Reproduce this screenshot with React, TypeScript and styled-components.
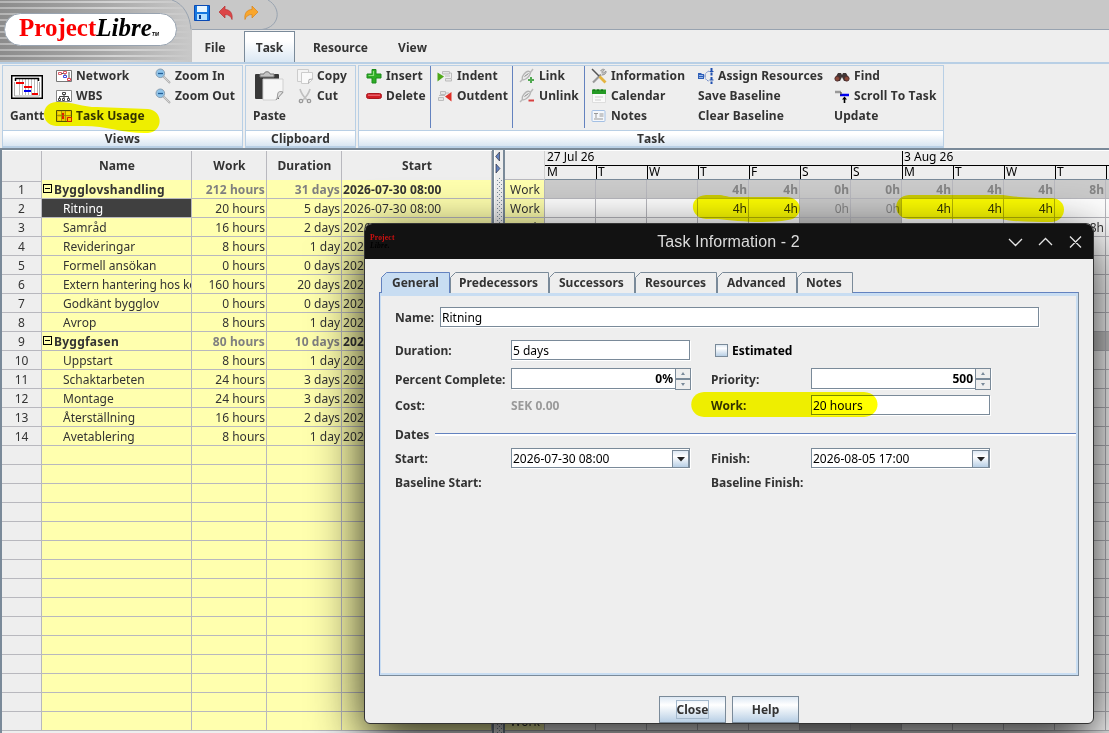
import React from "react";
import styled, { createGlobalStyle, css } from "styled-components";

const line = "#b8b8be";
const steel = "#7a8a99";
const sky = "#b8cfe5";
const blue = "#6382bf";

const GlobalStyle = createGlobalStyle`
  * { box-sizing: border-box; }
  body { margin: 0; overflow: hidden; background: #eee; }
`;

const Window = styled.div`
  position: relative;
  width: 1109px;
  height: 733px;
  overflow: hidden;
  display: flex;
  flex-direction: column;
  background: #eee;
  color: #333;
  font: 12px/16px "Noto Sans", "Open Sans", sans-serif;
  font-kerning: none;
  white-space: pre;
`;

/* ---------- header ---------- */
const Header = styled.header`
  display: flex;
  height: 62px;
  flex: none;
`;
const Brand = styled.div`
  position: relative;
  width: 192px;
  height: 62px;
  padding: 13px 0 0 4px;
  background: #c6c6c6;
`;
const Backdrop = styled.svg`
  position: absolute;
  left: 0;
  top: 0;
`;
const Pill = styled.div`
  position: relative;
  width: 173px;
  height: 33px;
  padding-left: 14px;
  border: 1px solid #98a3b0;
  border-radius: 17px;
  background: #fff;
  color: #000;
  font: bold 25px/28px "Liberation Serif", serif;
`;
const Red = styled.span`
  color: #fb0000;
`;
const Italic = styled.span`
  font-style: italic;
`;
const Tm = styled.span`
  font: italic bold 5px "Liberation Sans", sans-serif;
`;
const HeaderMain = styled.div`
  flex: 1;
  display: flex;
  flex-direction: column;
`;
const QuickBar = styled.div`
  height: 30px;
  background: #c8c8c8;
  border-bottom: 1px solid #98a3b0;
`;
const MenuTabs = styled.nav`
  display: flex;
  height: 32px;
  padding-top: 1px;
`;
const MenuTab = styled.div<{ $w: number; $active?: boolean; $gap?: number }>`
  width: ${(p) => p.$w}px;
  margin-right: ${(p) => p.$gap ?? 0}px;
  height: 31px;
  text-align: center;
  font-weight: bold;
  line-height: 31px;
  border: 1px solid transparent;
  border-bottom: 0;
  ${(p) =>
    p.$active &&
    css`
      border-color: ${steel};
      background: linear-gradient(#fff 30%, #dae7f3);
    `}
`;

/* ---------- ribbon ---------- */
const Ribbon = styled.div`
  display: flex;
  flex: none;
  gap: 2px;
  height: 88px;
  padding: 1px 0 0 2px;
  border-top: 2px solid ${sky};
  border-bottom: 2px solid ${steel};
  background: #eee;
`;
const Band = styled.section<{ $w: number }>`
  width: ${(p) => p.$w}px;
  height: 83px;
  border: 1px solid ${sky};
  border-width: 1px 1px 2px;
  display: flex;
  flex-direction: column;
`;
const BandBody = styled.div<{ $pad?: number }>`
  display: flex;
  height: 64px;
  padding-left: ${(p) => p.$pad ?? 0}px;
`;
const BandTitle = styled.div`
  height: 16px;
  border-top: 1px solid ${sky};
  background: linear-gradient(#fff 20%, #d8e5f2);
  text-align: center;
  font-weight: bold;
  line-height: 16px;
  letter-spacing: 0.12px;
`;
const BigButton = styled.div<{ $w: number }>`
  width: ${(p) => p.$w}px;
  padding-left: 7px;
  font-weight: bold;
  svg {
    display: block;
    margin: 0 0 0 1px;
    height: 42px;
  }
`;
const Commands = styled.div<{ $w: number; $rule?: boolean; $pad?: number }>`
  width: ${(p) => p.$w}px;
  height: 62px;
  padding-left: ${(p) => p.$pad ?? 0}px;
  flex: none;
  border-right: ${(p) => (p.$rule ? `1px solid ${blue}` : "0")};
`;
const Command = styled.div`
  display: flex;
  align-items: center;
  height: 20px;
  gap: 4px;
  font-weight: bold;
  letter-spacing: 0.1px;
  svg {
    flex: none;
  }
`;

/* ---------- workspace ---------- */
const Workspace = styled.main`
  display: flex;
  flex: 1;
  min-height: 0;
  overflow: hidden;
`;
const Sheet = styled.div`
  width: 494px;
  flex: none;
  border-left: 2px solid ${steel};
  border-right: 2px solid ${steel};
`;
const sheetCols = "40px 150px 75px 75px 150px";
const HeadRow = styled.div`
  display: grid;
  grid-template-columns: ${sheetCols};
  height: 30px;
  border-top: 1px solid #fff;
`;
const HeadCell = styled.div`
  padding-left: 1px;
  border-right: 1px solid ${line};
  border-bottom: 1px solid ${line};
  text-align: center;
  font-weight: bold;
  line-height: 30px;
  letter-spacing: 0.1px;
`;
const Row = styled.div<{ $bold?: boolean }>`
  display: grid;
  grid-template-columns: ${sheetCols};
  height: 19px;
  font-weight: ${(p) => (p.$bold ? "bold" : "normal")};
`;
const cell = css`
  height: 19px;
  border-right: 1px solid ${line};
  border-bottom: 1px solid ${line};
  line-height: 19px;
  overflow: hidden;
`;
const Num = styled.div`
  ${cell}
  text-align: center;
  font-weight: normal;
`;
const NameCell = styled.div<{ $group?: boolean; $selected?: boolean; $long?: boolean }>`
  ${cell}
  display: flex;
  align-items: center;
  gap: 2px;
  padding-left: ${(p) => (p.$group ? 1 : 21)}px;
  background: ${(p) => (p.$selected ? "#404040" : "#ffffae")};
  color: ${(p) => (p.$selected ? "#fff" : "#333")};
  letter-spacing: ${(p) => (p.$group ? 0.24 : p.$long ? -0.09 : 0)}px;
`;
const Value = styled.div<{ $dim?: boolean; $left?: boolean }>`
  ${cell}
  padding: 0 1px;
  background: #ffffae;
  text-align: ${(p) => (p.$left ? "left" : "right")};
  color: ${(p) => (p.$dim ? "#808080" : "#333")};
  letter-spacing: ${(p) => (p.$left || p.$dim ? 0.12 : 0)}px;
`;
const Toggle = styled.span`
  width: 9px;
  height: 9px;
  margin-top: -2px;
  border: 1px solid #000;
  background: linear-gradient(#000, #000) center / 5px 1px no-repeat;
`;
const Divider = styled.div`
  width: 9px;
  flex: none;
  border-left: 1px solid #fff;
  background: #eee;
`;
const Usage = styled.div`
  flex: 1;
  min-width: 0;
  overflow: hidden;
  border-left: 2px solid ${steel};
`;
const UsageHead = styled.div`
  display: flex;
  width: 703px;
  height: 30px;
  border-top: 1px solid #fff;
`;
const Corner = styled.div`
  width: 40px;
  flex: none;
  border-right: 1px solid #d0d0d0;
  border-bottom: 1px solid ${line};
`;
const Scale = styled.div`
  flex: none;
  border-bottom: 1px solid ${steel};
  color: #000;
`;
const Weeks = styled.div`
  display: flex;
  height: 15px;
  border-bottom: 1px solid #000;
  line-height: 12px;
`;
const Week = styled.div<{ $first?: boolean }>`
  width: ${(p) => (p.$first ? 357 : 306)}px;
  padding-left: ${(p) => (p.$first ? 2 : 1)}px;
  border-left: ${(p) => (p.$first ? "0" : "1px solid #000")};
`;
const Days = styled.div`
  display: flex;
`;
const Day = styled.div<{ $first?: boolean }>`
  width: 51px;
  height: 13px;
  padding-left: 1px;
  border-left: 1px solid ${(p) => (p.$first ? "transparent" : "#000")};
  line-height: 12px;
`;
const UsageRow = styled.div`
  display: flex;
  width: 703px;
  height: 19px;
`;
const WorkCell = styled.div`
  ${cell}
  width: 40px;
  flex: none;
  padding-left: 5px;
  background: #ffffae;
`;
const Slot = styled.div<{ $shade?: boolean; $bold?: boolean }>`
  ${cell}
  width: 51px;
  flex: none;
  padding-right: 1px;
  text-align: right;
  background: ${(p) => (p.$shade ? "#cbcbcb" : "#fff")};
  color: ${(p) => (p.$shade ? "#858585" : "#333")};
  font-weight: ${(p) => (p.$bold ? "bold" : "normal")};
`;

/* ---------- dialog ---------- */
const Dialog = styled.div`
  position: absolute;
  left: 364px;
  top: 223px;
  width: 730px;
  height: 501px;
  border: 1px solid #333;
  border-radius: 8px 8px 6px 6px;
  overflow: hidden;
  background: #eee;
  display: flex;
  flex-direction: column;
`;
const DialogShadow = styled.div`
  position: absolute;
  left: 364px;
  top: 223px;
  width: 730px;
  height: 501px;
  border-radius: 8px;
  box-shadow: 0 16px 52px rgba(0, 0, 0, 0.88);
`;
const TitleBar = styled.div`
  display: flex;
  height: 35px;
  flex: none;
  background: #121212;
  color: #dcdcdc;
`;
const MiniLogo = styled.div`
  width: 60px;
  padding: 10px 0 0 5px;
  font: bold 7.5px/8px "Liberation Serif", serif;
  letter-spacing: 0.2px;
  color: #d01010;
`;
const MiniDark = styled.div`
  color: #000;
  font-style: italic;
`;
const Title = styled.div`
  flex: 1;
  text-align: center;
  padding-left: 31px;
  font: 16px/35px "Liberation Sans", sans-serif;
  font-kerning: auto;
  letter-spacing: 0.1px;
`;
const TitleButtons = styled.svg`
  width: 92px;
  height: 35px;
`;
const TabRow = styled.div`
  display: flex;
  flex: none;
  margin: 13px 0 -1px 16px;
  height: 21px;
`;
const TabBox = styled.div<{ $w: number; $x: number }>`
  position: relative;
  width: ${(p) => p.$w}px;
  height: 21px;
  padding-left: ${(p) => p.$x}px;
  font-weight: bold;
  line-height: 21px;
`;
const TabShape = styled.svg`
  position: absolute;
  left: 0;
  top: 0;
`;
const TabText = styled.div`
  position: relative;
`;
const Pane = styled.div`
  width: 700px;
  height: 384px;
  flex: none;
  margin-left: 14px;
  padding: 10px 0 0 12px;
  border: 1px solid ${blue};
  border-right-color: ${steel};
  border-bottom-color: ${steel};
  box-shadow: inset -2px -2px #c8ddf2, inset 1px 3px #c8ddf2;
`;
const FormRow = styled.div<{ $h: number; $name?: boolean; $tight?: boolean }>`
  display: grid;
  grid-template-columns: ${(p) => (p.$name ? "45px 599px" : "116px 200px 100px 1fr")};
  height: ${(p) => p.$h}px;
  margin: ${(p) => (p.$tight ? "-1px 0" : "0")};
  padding-left: 3px;
  align-items: center;
  font-weight: bold;
`;
const Label = styled.span<{ $dim?: boolean }>`
  padding-top: 2px;
  color: ${(p) => (p.$dim ? "#999" : "#333")};
`;
const Field = styled.div<{ $w: number; $right?: boolean; $h?: number }>`
  display: flex;
  justify-content: ${(p) => (p.$right ? "flex-end" : "space-between")};
  width: ${(p) => p.$w}px;
  height: ${(p) => p.$h ?? 20}px;
  padding-left: 1px;
  border: 1px solid ${steel};
  background: #fff;
  box-shadow: 1px 1px #fff;
  color: #000;
  font-weight: ${(p) => (p.$right ? "bold" : "normal")};
  line-height: 19px;
`;
const Steppers = styled.div`
  display: grid;
  grid-template-rows: 11px 11px;
  width: 16px;
  height: 22px;
  margin: -1px -1px 0 2px;
  background: #eee;
`;
const Step = styled.div`
  border: 1px solid ${steel};
  display: grid;
  place-items: center;
`;
const DropButton = styled.div`
  width: 17px;
  height: 18px;
  margin-top: 1px;
  border: 1px solid ${steel};
  background: linear-gradient(#dde8f3, #fff 35%, ${sky});
  display: grid;
  place-items: center;
`;
const CheckLine = styled.div`
  display: flex;
  align-items: center;
  gap: 4px;
  margin-left: 4px;
  color: #000;
`;
const CheckText = styled.span`
  padding-top: 1px;
`;
const CheckBox = styled.span`
  width: 13px;
  height: 13px;
  border: 1px solid ${steel};
  background: linear-gradient(#dde8f3, #fff 30%, ${sky});
`;
const Separator = styled.div`
  display: flex;
  align-items: center;
  gap: 6px;
  height: 22px;
  margin-top: 1px;
  padding-left: 3px;
  font-weight: bold;
  &::after {
    content: "";
    flex: 1;
    height: 2px;
    margin: 0 2px 0 0;
    border-top: 1px solid ${blue};
    background: #fff;
  }
`;
const Buttons = styled.div`
  display: flex;
  gap: 6px;
  margin: 20px 0 0 294px;
`;
const Button = styled.div`
  width: 67px;
  height: 27px;
  border: 1px solid ${steel};
  background: linear-gradient(#dde8f3, #fff 32%, ${sky});
  display: grid;
  place-items: center;
  font-weight: bold;
`;
const Focus = styled.span`
  border: 1px solid #a3b8cc;
  height: 19px;
  line-height: 17px;
`;
const Marker = styled.svg`
  position: absolute;
  left: 0;
  top: 0;
  mix-blend-mode: multiply;
  pointer-events: none;
`;

/* ---------- icons ---------- */
const Icon = ({ children }: { children?: React.ReactNode }) => (
  <svg width="16" height="16" viewBox="0 0 16 16" fill="none">
    {children}
  </svg>
);
const NetworkIcon = () => (
  <Icon>
    <path d="M.5 2.500h15v11H.5z" fill="#fff" stroke="#777" />
    <path d="M2.500 4.500h3v2h-3zM7.500 3.500h3v2h-3z" fill="#fff" stroke="#e05868" />
    <path d="M13 4v6M5.500 5.500h2M9 6v2" stroke="#555" />
    <path d="M7.500 7.500h3v2h-3z" stroke="#4048e0" />
    <path d="M11.500 10.500h3v2h-3z" fill="#fff" stroke="#e04050" />
  </Icon>
);
const WbsIcon = () => (
  <Icon>
    <path d="M.5 2.500h15v11H.5z" fill="#fff" stroke="#888" />
    <path d="M6.500 4.500h3v2h-3zM2.500 10.500h2v2h-2zM6.500 10.500h2v2h-2zM11.500 10.500h2v2h-2zM8 7v3M3.500 10V8.500h9V10" stroke="#444" />
  </Icon>
);
const UsageIcon = () => (
  <Icon>
    <path d="M.5 2.500h15v11H.5z" fill="#e8c070" stroke="#555" />
    <path d="M2 4h3v2H2zM2 9h3v3H2zM10 4h4v3h-4z" fill="#f4e4b0" />
    <path d="M6 5h2v6H6z" fill="#e02020" />
    <path d="M1 7.500h14M5.500 3v10M9.500 3v10" stroke="#886" strokeWidth=".7" />
    <path d="M11.500 9.500h4v4h-4z" fill="#ffc040" stroke="#d02020" />
  </Icon>
);
const ZoomIcon = () => (
  <Icon>
    <path d="m8.500 8.500 6.500 6.500" stroke="#aaa" strokeWidth="2" />
    <path d="m8.500 8.500 6 6" stroke="#e0e0e0" strokeWidth=".8" />
    <circle cx="5.300" cy="5.300" r="4.300" fill="#8fc4ea" stroke="#8a9eb0" />
    <path d="M3 5.500h5" stroke="#245f96" strokeWidth="1.300" />
  </Icon>
);
const GanttIcon = () => (
  <svg width="32" height="42" viewBox="0 0 32 42" fill="none">
    <path d="M.7 9.700h30.600v22.600H.7z" fill="#fff" stroke="#000" strokeWidth="1.500" />
    <path d="M8.500 13v16M11.500 13v16M14.500 13v16M17.500 13v16M20.500 13v16M23.500 13v16M26.500 13v16" stroke="#bbb" />
    <path d="M4 12.500h24M4.500 12v3M27.500 12v3" stroke="#000" strokeWidth="1.500" />
    <path d="M3.500 16v14h25V16" stroke="#aaa" />
    <path d="M5 17h8M13 21h8M21 28h6" stroke="#f00000" strokeWidth="2" />
    <path d="M13 25h7" stroke="#0000f0" strokeWidth="2" />
  </svg>
);
const PasteIcon = () => (
  <svg width="32" height="42" viewBox="0 0 32 42" fill="none">
    <path d="M2 8h22a1 1 0 0 1 1 1v23a1 1 0 0 1-1 1H2a1 1 0 0 1-1-1V9a1 1 0 0 1 1-1z" fill="#383838" />
    <path d="M6 11V8h4c0-3 6-3 6 0h4v3z" fill="#c4c4c4" stroke="#777" />
    <path d="M9 13h20v14l-7 7H9z" fill="#f6f6f6" stroke="#d0d0d0" />
    <path d="M29 26c-3-1-5 0-5 1-1 3 0 5-2 7z" fill="#e2e2e2" stroke="#999" />
  </svg>
);
const CopyIcon = () => (
  <Icon>
    <path d="M.5 1.500h11v12H.5z" fill="#f4f4f4" stroke="#ccc" />
    <path d="M4.500 4.500h11v7l-4 4h-7z" fill="#fafafa" stroke="#ccc" />
    <path d="m11.500 15.500.5-4 3.500-.5" stroke="#aaa" />
  </Icon>
);
const CutIcon = () => (
  <Icon>
    <path d="M3 1c1 4 3 7 7 11M13 1c-1 4-3 7-7 11" stroke="#c0c0c0" strokeWidth="1.600" />
    <circle cx="4" cy="13" r="1.700" stroke="#999" strokeWidth="1.300" />
    <circle cx="12" cy="13" r="1.700" stroke="#999" strokeWidth="1.300" />
  </Icon>
);
const PlusIcon = () => (
  <Icon>
    <path d="M6 1.500h4v4.500h5v4h-5v5H6v-5H1V6h5z" fill="#2fae25" stroke="#1c8a1c" strokeLinejoin="round" />
    <path d="M7.500 3v4.500H2.500" stroke="#8be07c" strokeWidth="1.200" />
  </Icon>
);
const MinusIcon = () => (
  <Icon>
    <rect x=".5" y="5.500" width="15" height="5" rx="2" fill="#d01c24" stroke="#a81820" />
    <path d="M2 7.200h12" stroke="#f08088" />
  </Icon>
);
const IndentIcon = ({ out }: { out?: boolean }) => (
  <Icon>
    <g stroke="#bcbcbc" transform={out ? undefined : "translate(1 0)"}>
      <path d={out ? "M1.500 9.500h5v3h-5zM3.500 3.500h5v3h-5z" : "M4.500 3.500h7v2.500h-7zM7.500 10.500h6v2.500h-6z"} fill="#e4e4e4" />
      <path d={out ? "M9 5h3M2 7.500h6" : "M12 5h1.500v5M7 8h5"} />
    </g>
    {out ? <path d="M14.500 4 8 8.500l6.500 5z" fill="#e03028" /> : <path d="m.5 4.500 6.500 4-6.500 5z" fill="#4fa818" />}
  </Icon>
);
const LinkIcon = ({ cut }: { cut?: boolean }) => (
  <Icon>
    <path d="M1 14 4 11M11 5l3-4" stroke="#bbb" strokeWidth="1.500" />
    <path d="M3.500 8.500c2-4 5-6 7-5s0 5-3 7-5 2-4-2z" fill="#eaeaea" stroke="#b4b4b4" strokeWidth="1.300" />
    <path d="m5.500 8.500 4-3" stroke="#888" />
    {cut ? <path d="M9.500 12.500H15" stroke="#d84040" strokeWidth="2" /> : <path d="M9 12h6M12 9v6" stroke="#50a850" strokeWidth="2" />}
  </Icon>
);
const ToolsIcon = () => (
  <Icon>
    <path d="M2 14.500 10 6.500" stroke="#999" strokeWidth="2.200" />
    <path d="M9.500 3c1-2 3-2 4-1.500L11.500 4l1 1 2.500-2c.5 2-1 4-4 4" fill="#c4c4c4" stroke="#888" strokeWidth=".8" />
    <path d="m1 1 7 7" stroke="#555" strokeWidth="1.500" />
    <path d="m8.500 8.500 6 6" stroke="#e4b440" strokeWidth="2.800" />
  </Icon>
);
const CalendarIcon = () => (
  <Icon>
    <path d="M1.500 4.500h13v10h-13z" fill="#fafafa" stroke="#ddd" />
    <path d="M1 1.500h14V6H1z" fill="#259a25" />
    <path d="M3 1v2M7 1v2M11 1v2" stroke="#0c5c0c" />
    <path d="M4 9h8M4 12h6" stroke="#e4e4e4" strokeWidth="2" />
  </Icon>
);
const NotesIcon = () => (
  <Icon>
    <rect x="1" y="2.500" width="13" height="11" rx="1" fill="#f4f7fb" stroke="#a4c0e4" />
    <path d="M3 5.500h4M5 5v5M8.500 6h4M8.500 8h4M3 11h9" stroke="#999" />
  </Icon>
);
const AssignIcon = () => (
  <Icon>
    <path d="M0 5h3l1 1h2v5H0z" fill="#3060b8" />
    <path d="M1 7.500h4M1 9.500h4" stroke="#b8d0f8" strokeWidth=".8" />
    <path d="M7 8c0-3 2-4 4-5M7 8c0 3 2 5 4 5" stroke="#5878c0" strokeDasharray="1.500 1" />
    <path d="M13.500 0v16" stroke="#2050b0" strokeWidth="2" strokeDasharray="3 1.500" />
    <path d="M11.500 3.500h4M11.500 12h4" stroke="#2050b0" />
  </Icon>
);
const FindIcon = () => (
  <Icon>
    <path d="m1 10 3-5h3l1 2 1-2h3l3 5-2 3h-3l-2-4-2 4H3z" fill="#403636" />
    <circle cx="3.300" cy="10.700" r="2.400" fill="#8a4838" stroke="#503030" />
    <circle cx="12.700" cy="10.700" r="2.400" fill="#8a4838" stroke="#503030" />
  </Icon>
);
const ScrollIcon = () => (
  <Icon>
    <path d="M1 4h6" stroke="#999" strokeWidth="2.500" />
    <path d="M6 7h9" stroke="#0000f0" strokeWidth="2.500" />
    <path d="M7 4v3" stroke="#333" />
    <path d="M10.500 15v-5" stroke="#000" strokeWidth="1.600" />
    <path d="m8 11.500 2.500-3 2.500 3z" fill="#000" />
  </Icon>
);

/* ---------- data ---------- */
type Task = [name: string, work: string, duration: string, group?: boolean];
const tasks: Task[] = [
  ["Bygglovshandling", "212 hours", "31 days", true],
  ["Ritning", "20 hours", "5 days"],
  ["Samråd", "16 hours", "2 days"],
  ["Revideringar", "8 hours", "1 day"],
  ["Formell ansökan", "0 hours", "0 days"],
  ["Extern hantering hos ko", "160 hours", "20 days"],
  ["Godkänt bygglov", "0 hours", "0 days"],
  ["Avrop", "8 hours", "1 day"],
  ["Byggfasen", "80 hours", "10 days", true],
  ["Uppstart", "8 hours", "1 day"],
  ["Schaktarbeten", "24 hours", "3 days"],
  ["Montage", "24 hours", "3 days"],
  ["Återställning", "16 hours", "2 days"],
  ["Avetablering", "8 hours", "1 day"],
];
const hours: Record<number, string[]> = {
  0: ["", "", "", "4h", "4h", "0h", "0h", "4h", "4h", "4h", "8h"],
  1: ["", "", "", "4h", "4h", "0h", "0h", "4h", "4h", "4h", ""],
  2: ["", "", "", "", "", "", "", "", "", "", "8h"],
};
const rowIndexes = Array.from({ length: 29 }, (_, i) => i);
const slots = Array.from({ length: 12 }, (_, i) => i);
const days = ["M", "T", "W", "T", "F", "S", "S", "M", "T", "W", "T", ""];

const dialogTabs: { label: string; w: number; x: number }[] = [
  { label: "General", w: 69, x: 11 },
  { label: "Predecessors", w: 99, x: 9 },
  { label: "Successors", w: 86, x: 10 },
  { label: "Resources", w: 82, x: 10 },
  { label: "Advanced", w: 80, x: 10 },
  { label: "Notes", w: 56, x: 9 },
];

const Spinner = ({ value }: { value: string }) => (
  <Field $w={180} $right $h={21}>
    {value}
    <Steppers>
      <Step>
        <svg width="4" height="3"><path d="M0 3 2 0l2 3z" fill={steel} /></svg>
      </Step>
      <Step>
        <svg width="4" height="3"><path d="M0 0h4L2 3z" fill={steel} /></svg>
      </Step>
    </Steppers>
  </Field>
);
const DateBox = ({ value }: { value: string }) => (
  <Field $w={179}>
    {value}
    <DropButton>
      <svg width="8" height="5"><path d="M0 0h8L4 4.500z" fill="#222" /></svg>
    </DropButton>
  </Field>
);

export default function App() {
  return (
    <Window>
      <GlobalStyle />
      <Header>
        <Brand>
          <Backdrop width="280" height="62" fill="none">
            <defs>
              <linearGradient id="metal">
                <stop offset="0" stopColor="#8c8c8c" />
                <stop offset=".55" stopColor="#a8a8a8" />
                <stop offset="1" stopColor="#c8c8c8" />
              </linearGradient>
              <linearGradient id="shine">
                <stop offset="0" stopColor="#b4b4b4" />
                <stop offset=".6" stopColor="#d4d4d4" />
                <stop offset="1" stopColor="#c8c8c8" />
              </linearGradient>
            </defs>
            <path d="M0 0h172c12 4 18 16 19 30v32H0z" fill="url(#metal)" />
            {[1, 7, 13, 19, 25, 31, 37, 43, 49, 55, 60].map((y) => (
              <rect key={y} x="0" y={y} width="191" height="2" fill="url(#shine)" />
            ))}
            <path d="M172 0h20v30h-1C190 16 184 4 172 0z" fill="#c8c8c8" />
            <path d="M172 0c12 4 18 16 19 29.500" stroke="#98a3b0" />
            <path d="M268 0c14 8 12 27-6 29.500" stroke="#98a3b0" />
            <path d="M194.500 5.500h15v15h-15z" fill="#1678e0" stroke="#0a4ab4" />
            <path d="M197 6h10v6h-10z" fill="#e8f6ff" />
            <path d="M197 14h10v6h-10z" fill="#b4e0ff" />
            <path d="M199 15h2v4h-2z" fill="#0a3c90" />
            <path d="m219 12 6-6v3.500c5 0 8 4 7 10-1-3-3-5-7-5V18z" fill="#dc4648" stroke="#b83030" strokeWidth=".7" />
            <path d="m258 12-6-6v3.500c-5 0-8 4-7 10 1-3 3-5 7-5V18z" fill="#f9a62c" stroke="#d88418" strokeWidth=".7" />
          </Backdrop>
          <Pill>
            <Red>Project</Red>
            <Italic>Libre</Italic>
            <Tm>TM</Tm>
          </Pill>
        </Brand>
        <HeaderMain>
          <QuickBar />
          <MenuTabs>
            <MenuTab $w={46} $gap={6}>File</MenuTab>
            <MenuTab $w={51} $active>Task</MenuTab>
            <MenuTab $w={91}>Resource</MenuTab>
            <MenuTab $w={53}>View</MenuTab>
          </MenuTabs>
        </HeaderMain>
      </Header>

      <Ribbon>
        <Band $w={241}>
          <BandBody>
            <BigButton $w={53}>
              <GanttIcon />
              Gantt
            </BigButton>
            <Commands $w={99}>
              <Command><NetworkIcon />Network</Command>
              <Command><WbsIcon />WBS</Command>
              <Command><UsageIcon />Task Usage</Command>
            </Commands>
            <Commands $w={85}>
              <Command><ZoomIcon />Zoom In</Command>
              <Command><ZoomIcon />Zoom Out</Command>
            </Commands>
          </BandBody>
          <BandTitle>Views</BandTitle>
        </Band>
        <Band $w={111}>
          <BandBody>
            <BigButton $w={51}>
              <PasteIcon />
              Paste
            </BigButton>
            <Commands $w={55}>
              <Command><CopyIcon />Copy</Command>
              <Command><CutIcon />Cut</Command>
            </Commands>
          </BandBody>
          <BandTitle>Clipboard</BandTitle>
        </Band>
        <Band $w={586}>
          <BandBody $pad={7}>
            <Commands $w={65} $rule>
              <Command><PlusIcon />Insert</Command>
              <Command><MinusIcon />Delete</Command>
            </Commands>
            <Commands $w={82} $rule $pad={6}>
              <Command><IndentIcon />Indent</Command>
              <Command><IndentIcon out />Outdent</Command>
            </Commands>
            <Commands $w={72} $rule $pad={6}>
              <Command><LinkIcon />Link</Command>
              <Command><LinkIcon cut />Unlink</Command>
            </Commands>
            <Commands $w={113} $pad={6}>
              <Command><ToolsIcon />Information</Command>
              <Command><CalendarIcon />Calendar</Command>
              <Command><NotesIcon />Notes</Command>
            </Commands>
            <Commands $w={136}>
              <Command><AssignIcon />Assign Resources</Command>
              <Command>Save Baseline</Command>
              <Command>Clear Baseline</Command>
            </Commands>
            <Commands $w={107}>
              <Command><FindIcon />Find</Command>
              <Command><ScrollIcon />Scroll To Task</Command>
              <Command>Update</Command>
            </Commands>
          </BandBody>
          <BandTitle>Task</BandTitle>
        </Band>
      </Ribbon>

      <Workspace>
        <Sheet>
          <HeadRow>
            {["", "Name", "Work", "Duration", "Start"].map((h) => (
              <HeadCell key={h}>{h}</HeadCell>
            ))}
          </HeadRow>
          {rowIndexes.map((i) => {
            const [name, work, duration, group] = tasks[i] ?? ["", "", ""];
            return (
              <Row key={i} $bold={group}>
                <Num>{tasks[i] ? i + 1 : ""}</Num>
                <NameCell $group={group} $selected={i === 1} $long={name.length > 20}>
                  {group && <Toggle />}
                  {name}
                </NameCell>
                <Value $dim={group}>{work}</Value>
                <Value $dim={group}>{duration}</Value>
                <Value $left>{tasks[i] ? "2026-07-30 08:00" : ""}</Value>
              </Row>
            );
          })}
        </Sheet>
        <Divider>
          <svg width="8" height="583">
            <defs>
              <pattern id="dots" width="4" height="4" patternUnits="userSpaceOnUse">
                <path d="M0 0h1v1H0zM2 2h1v1H2z" fill={steel} />
              </pattern>
            </defs>
            <rect x="2" y="28" width="5" height="555" fill="url(#dots)" />
            <path d="M4.500 2v9L.7 6.500z" fill={blue} stroke="#223" strokeWidth=".6" />
            <path d="M1 14v9l4-4.500z" fill={blue} stroke="#223" strokeWidth=".6" />
          </svg>
        </Divider>
        <Usage>
          <UsageHead>
            <Corner />
            <Scale>
              <Weeks>
                <Week $first>27 Jul 26</Week>
                <Week>3 Aug 26</Week>
              </Weeks>
              <Days>
                {days.map((d, i) => (
                  <Day key={i} $first={i === 0}>{d}</Day>
                ))}
              </Days>
            </Scale>
          </UsageHead>
          {rowIndexes.map((i) => {
            const group = !!tasks[i]?.[3];
            return (
              <UsageRow key={i}>
                <WorkCell>Work</WorkCell>
                {slots.map((s) => (
                  <Slot key={s} $bold={group} $shade={group || s === 5 || s === 6}>
                    {hours[i]?.[s]}
                  </Slot>
                ))}
              </UsageRow>
            );
          })}
        </Usage>
      </Workspace>

      <DialogShadow />
      <Dialog>
        <TitleBar>
          <MiniLogo>
            <div>Project</div>
            <MiniDark>Libre.</MiniDark>
          </MiniLogo>
          <Title>Task Information - 2</Title>
          <TitleButtons viewBox="0 0 92 35" fill="none" stroke="#e4e4e4" strokeWidth="1.300">
            <path d="m8 15 6.500 6.500L21 15M38 21l6.500-6.500L51 21M69 12.500 80 23.500M80 12.500 69 23.500" />
          </TitleButtons>
        </TitleBar>
        <TabRow>
          {dialogTabs.map((t, i) => (
            <TabBox key={t.label} $w={t.w} $x={t.x}>
              <TabShape width={t.w} height="21" fill="none">
                <path
                  d={`M.5 21V5.500L5.500.5H${t.w - 0.5}V21`}
                  fill={i === 0 ? "#c8ddf2" : "#eee"}
                  stroke={i === 0 ? blue : steel}
                />
              </TabShape>
              <TabText>{t.label}</TabText>
            </TabBox>
          ))}
        </TabRow>
        <Pane>
          <FormRow $h={28} $name>
            <Label>Name:</Label>
            <Field $w={599}>Ritning</Field>
          </FormRow>
          <FormRow $h={38}>
            <Label>Duration:</Label>
            <Field $w={179}>5 days</Field>
            <CheckLine><CheckBox /><CheckText>Estimated</CheckText></CheckLine>
          </FormRow>
          <FormRow $h={21} $tight>
            <Label>Percent Complete:</Label>
            <Spinner value="0%" />
            <Label>Priority:</Label>
            <Spinner value="500" />
          </FormRow>
          <FormRow $h={34}>
            <Label>Cost:</Label>
            <Label $dim>SEK 0.00</Label>
            <Label>Work:</Label>
            <Field $w={179}>20 hours</Field>
          </FormRow>
          <Separator><Label>Dates</Label></Separator>
          <FormRow $h={26}>
            <Label>Start:</Label>
            <DateBox value="2026-07-30 08:00" />
            <Label>Finish:</Label>
            <DateBox value="2026-08-05 17:00" />
          </FormRow>
          <FormRow $h={22}>
            <Label>Baseline Start:</Label>
            <span />
            <Label>Baseline Finish:</Label>
          </FormRow>
        </Pane>
        <Buttons>
          <Button><Focus>Close</Focus></Button>
          <Button>Help</Button>
        </Buttons>
      </Dialog>

      <Marker width="1109" height="733" fill="#ff0">
        <path d="M56 102C70 101 82 107 97 107L148 109C164 111 163 132 148 133C125 134 105 125 80 126H56C40 125 40 103 56 102Z" />
        <path d="M706 195H718C724 195 727 197 732 197H786C804 197 804 219 788 220C765 224 735 221 718 219H706C689 218 688 196 706 195Z" />
        <path d="M909 195H1003C1015 197 1030 198 1052 198C1068 199 1068 220 1052 222C1032 222 1015 222 1001 219H909C892 218 892 196 909 195Z" />
        <path d="M704 392H864C882 393 882 416 864 417H704C687 416 687 393 704 392Z" />
      </Marker>
    </Window>
  );
}
